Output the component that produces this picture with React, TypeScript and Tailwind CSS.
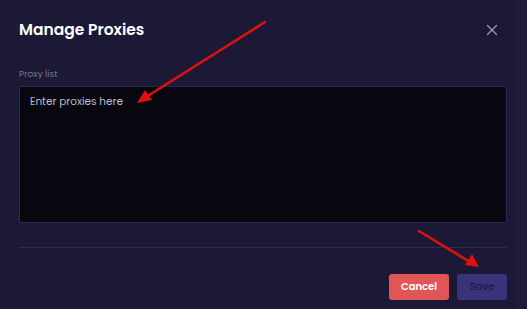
import { X } from "lucide-react";

export default function App() {
  return (
    <div
      className="relative w-[527px] h-[309px] overflow-hidden bg-[#1b1935] flex"
      style={{ fontFamily: "Poppins, Inter, 'Noto Sans', sans-serif" }}
    >
      <div className="w-[516px] h-full flex flex-col px-[19px] pt-[18px]">
        {/* Header */}
        <div className="flex items-center justify-between h-[24px]">
          <h1 className="text-[15.5px] font-semibold text-white">
            Manage Proxies
          </h1>
          <button className="text-[#9b97bb] mr-[-4px]">
            <X size={18} strokeWidth={1.6} />
          </button>
        </div>

        {/* Body */}
        <label className="mt-[26px] text-[9px] text-[#77739c]">Proxy list</label>
        <textarea
          placeholder="Enter proxies here"
          className="mt-[4px] w-[488px] h-[137px] bg-[#08060f] border border-[#2b2853] rounded-[1px] px-[10px] py-[7px] text-[10.5px] text-white placeholder:text-[#bdbbcc] resize-none outline-none"
        />

        <div className="mt-[24px] w-[488px] h-px bg-[#2e2a52]" />

        {/* Footer */}
        <div className="mt-[26px] flex justify-end gap-[8px] w-[488px]">
          <button className="w-[60px] h-[26px] rounded-[3px] bg-[#e05656] text-white text-[10px] font-semibold">
            Cancel
          </button>
          <button className="w-[50px] h-[26px] rounded-[3px] bg-[#38337a] text-[#1f1b4c] text-[10px] font-medium">
            Save
          </button>
        </div>
      </div>
      <div className="flex-1 h-full bg-[#1e1c3a]" />

      {/* Annotation arrows */}
      <svg
        className="absolute inset-0 pointer-events-none"
        width="527"
        height="309"
        viewBox="0 0 527 309"
      >
        <line x1="265" y1="22" x2="146" y2="97" stroke="#e01010" strokeWidth="2.6" strokeLinecap="round" />
        <polygon points="137,103 145,90 152,100" fill="#e01010" />
        <line x1="419" y1="231" x2="470" y2="262" stroke="#e01010" strokeWidth="2.6" strokeLinecap="round" />
        <polygon points="479,267 465,265 472,254" fill="#e01010" />
      </svg>
    </div>
  );
}
